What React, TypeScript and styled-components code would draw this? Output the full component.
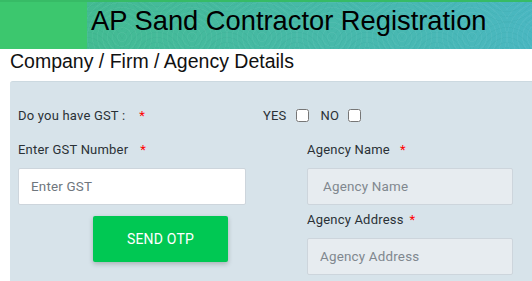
import styled, { createGlobalStyle } from "styled-components";

const GlobalStyles = createGlobalStyle`
  html, body {
    margin: 0;
    padding: 0;
    background: #ffffff;
    overflow: hidden;
  }
  * {
    box-sizing: border-box;
  }
`;

const Header = styled.header`
  display: flex;
  height: 49px;
  border-top: 2px solid #37bb66;
  background: #3cc76e;
`;

const Stripe = styled.div`
  width: 87px;
  flex: none;
`;

// teal band with the faint ring pattern
const Banner = styled.div`
  flex: 1;
  padding: 3px 0 0 4px;
  background:
    repeating-radial-gradient(circle at 35px 35px, rgba(255, 255, 255, 0) 0 4px, rgba(255, 255, 255, 0.045) 4px 5px) 0 0 / 70px 70px,
    repeating-radial-gradient(circle at 35px 35px, rgba(0, 70, 70, 0) 0 4px, rgba(0, 70, 70, 0.035) 4px 5px) 35px 20px / 70px 70px,
    linear-gradient(to right, #43bb92, #47b9aa 55%, #4ab7c1 100%);
`;

const HeaderTitle = styled.h1`
  margin: 0;
  font-family: "Liberation Sans", Arial, sans-serif;
  font-weight: normal;
  font-size: 27.3px;
  line-height: 31px;
  color: #000000;
  white-space: nowrap;
`;

const SectionTitle = styled.h2`
  margin: 1px 0 0 10px;
  font-family: "Liberation Sans", Arial, sans-serif;
  font-weight: normal;
  font-size: 19.5px;
  line-height: 22px;
  color: #111111;
  white-space: nowrap;
`;

const Panel = styled.section`
  margin: 9px 0 0 10px;
  padding: 27px 0 12px 8px;
  background: #d7e3ea;
  border-top: 1px solid #ccd9e0;
  border-radius: 3px 0 0 0;
  font-family: Roboto, "Liberation Sans", sans-serif;
  font-size: 13px;
  letter-spacing: 0.2px;
  color: #2a3136;
`;

const GstRow = styled.div`
  display: flex;
  align-items: center;
  height: 16px;
  line-height: 16px;
  margin-top: -1px;
`;

const Question = styled.div`
  width: 245px;
  white-space: nowrap;
`;

const Choice = styled.label`
  display: inline-flex;
  align-items: center;
  margin-right: 12px;
`;

const Check = styled.input.attrs({ type: "checkbox" })`
  width: 13px;
  height: 13px;
  margin: -2px 0 0 9px;
`;

const Columns = styled.div`
  display: flex;
  gap: 61px;
  margin-top: 18px;
`;

const Column = styled.div<{ $width: number }>`
  display: flex;
  flex-direction: column;
  width: ${(p) => p.$width}px;
`;

const Label = styled.label<{ $top?: number }>`
  display: block;
  margin-top: ${(p) => p.$top ?? 0}px;
  line-height: 16px;
  white-space: nowrap;
`;

const Star = styled.span<{ $gap: number }>`
  color: #ff0000;
  margin-left: ${(p) => p.$gap}px;
`;

const TextInput = styled.input<{ $pad: number }>`
  display: block;
  width: 100%;
  height: 37px;
  margin-top: 10px;
  padding: 0 0 0 ${(p) => p.$pad}px;
  border: 1px solid #cdd5dc;
  border-radius: 2px;
  background: #ffffff;
  font-family: Roboto, "Liberation Sans", sans-serif;
  font-size: 13.4px;
  letter-spacing: 0.2px;
  color: #333333;
  outline: none;
  &::placeholder {
    color: #6f767d;
  }
  &:disabled {
    background: #e7ecf0;
  }
  &:disabled::placeholder {
    color: #80878e;
  }
`;

const SendButton = styled.button`
  width: 135px;
  height: 46px;
  margin: 11px 0 0 75px;
  border: none;
  border-radius: 2px;
  background: #00c853;
  color: #ffffff;
  font-family: Roboto, "Liberation Sans", sans-serif;
  font-size: 14px;
  letter-spacing: 0.2px;
  box-shadow: 0 2px 5px rgba(0, 0, 0, 0.22);
  cursor: pointer;
`;

function App() {
  return (
    <>
      <GlobalStyles />
      <Header>
        <Stripe />
        <Banner>
          <HeaderTitle>AP Sand Contractor Registration</HeaderTitle>
        </Banner>
      </Header>
      <SectionTitle>Company / Firm / Agency Details</SectionTitle>
      <Panel>
        <GstRow>
          <Question>
            Do you have GST :<Star $gap={14}>*</Star>
          </Question>
          <Choice>
            YES
            <Check />
          </Choice>
          <Choice>
            NO
            <Check />
          </Choice>
        </GstRow>
        <Columns>
          <Column $width={228}>
            <Label>
              Enter GST Number<Star $gap={12}>*</Star>
            </Label>
            <TextInput $pad={12} placeholder="Enter GST" />
            <SendButton>SEND OTP</SendButton>
          </Column>
          <Column $width={206}>
            <Label>
              Agency Name<Star $gap={10}>*</Star>
            </Label>
            <TextInput $pad={15} placeholder="Agency Name" disabled />
            <Label $top={7}>
              Agency Address<Star $gap={6}>*</Star>
            </Label>
            <TextInput $pad={12} placeholder="Agency Address" disabled />
          </Column>
        </Columns>
      </Panel>
    </>
  );
}

export default App;
